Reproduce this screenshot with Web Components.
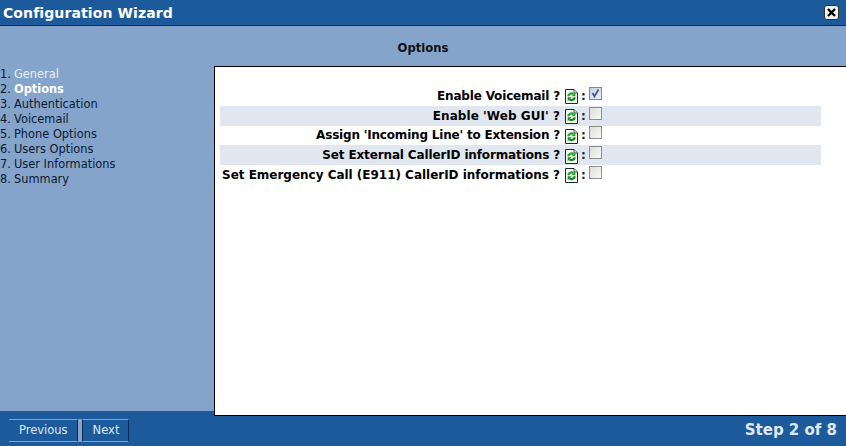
<!doctype html>
<html>
<head>
<meta charset="utf-8">
<style>
  html, body { margin: 0; height: 100%; }
  body { font: 11px "DejaVu Sans", Verdana, sans-serif; overflow: hidden; }
</style>
</head>
<body>
<wizard-window>
  <span slot="title">Configuration Wizard</span>
  <span slot="heading">Options</span>
  <wizard-steps slot="steps" current="2">
    <li>General</li><li>Options</li><li>Authentication</li><li>Voicemail</li>
    <li>Phone Options</li><li>Users Options</li><li>User Informations</li><li>Summary</li>
  </wizard-steps>
  <option-row checked style="--track:-.17px">Enable Voicemail ?</option-row>
  <option-row shaded style="--track:.06px">Enable 'Web GUI' ?</option-row>
  <option-row style="--track:-.19px">Assign 'Incoming Line' to Extension ?</option-row>
  <option-row shaded style="--track:-.14px">Set External CallerID informations ?</option-row>
  <option-row style="--track:-.02px">Set Emergency Call (E911) CallerID informations ?</option-row>
  <wiz-button slot="buttons">Previous</wiz-button>
  <wiz-button slot="buttons" class="next">Next</wiz-button>
  <span slot="status">Step 2 of 8</span>
</wizard-window>

<script>
class WizardWindow extends HTMLElement {
  constructor() {
    super()
    this.attachShadow({ mode: 'open' })
    this.shadowRoot.innerHTML = `
      <style>
        :host { display: flex; flex-direction: column; width: 846px; height: 446px; background: #84a4cc; overflow: hidden; }
        header { flex: none; height: 25px; border-bottom: 1px solid #0d2b4d; background: #1d5a9c; color: #fff;
          display: flex; align-items: center; justify-content: space-between; padding: 0 7px 0 3px; }
        header b { font-size: 14px; letter-spacing: .1px; }
        .close { width: 15px; height: 15px; box-sizing: border-box; border: 1px solid #333; border-radius: 3px; background: #f2f2f2;
          display: flex; margin-top: -1px; }
        .close svg { display: block; }
        h2 { flex: none; margin: 0; height: 40px; padding-top: 15px; box-sizing: border-box; text-align: center;
          font-size: 11.6px; line-height: 14px; color: #111; }
        .middle { flex: 1; min-height: 0; display: flex; position: relative; z-index: 1; margin-bottom: -5px; }
        aside { flex: none; width: 214px; padding-top: 1px; box-sizing: border-box; }
        main { flex: 1; background: #fff; border: 1px solid #000; border-right: 0; padding: 19px 25px 0 5px; }
        footer { flex: none; height: 35px; background: #1d5a9c; display: flex; align-items: center; justify-content: space-between;
          padding: 0 9px 0 9px; }
        .buttons { display: flex; padding-top: 3px; }
        .status { font-size: 15px; font-weight: bold; color: #dfe8f3; padding-top: 2px; }
      </style>
      <header><b><slot name="title"></slot></b>
        <span class="close"><svg width="13" height="13" viewBox="0 0 13 13"><path d="M3 3l7 7M10 3l-7 7" stroke="#000" stroke-width="2.4" fill="none"/></svg></span>
      </header>
      <h2><slot name="heading"></slot></h2>
      <div class="middle">
        <aside><slot name="steps"></slot></aside>
        <main><slot></slot></main>
      </div>
      <footer>
        <div class="buttons"><slot name="buttons"></slot></div>
        <div class="status"><slot name="status"></slot></div>
      </footer>`
  }
}

class WizardSteps extends HTMLElement {
  constructor() {
    super()
    this.attachShadow({ mode: 'open' })
    this.shadowRoot.innerHTML = `
      <style>
        :host { display: block; }
        ol { margin: 0; padding: 0; list-style: none; }
        li { height: 15px; line-height: 15px; font-size: 11.4px; color: #0a1a2e; white-space: nowrap; }
        li.done { color: #e8eef6; }
        li.now { color: #fff; font-weight: bold; }
        span { display: inline-block; width: 14px; color: #0a1a2e; font-weight: normal; }
      </style>
      <ol></ol>`
  }
  connectedCallback() {
    const current = Number(this.getAttribute('current'))
    const list = this.shadowRoot.querySelector('ol')
    ;[...this.querySelectorAll('li')].forEach((item, i) => {
      const li = document.createElement('li')
      if (i + 1 === current) li.className = 'now'
      else if (i + 1 < current) li.className = 'done'
      const num = document.createElement('span')
      num.textContent = `${i + 1}.`
      li.append(num, item.textContent)
      list.append(li)
    })
  }
}

class OptionRow extends HTMLElement {
  constructor() {
    super()
    this.attachShadow({ mode: 'open' })
    this.shadowRoot.innerHTML = `
      <style>
        :host { display: grid; grid-template-columns: 345px 13px 11px 16px; height: 19.75px; align-items: center; width: 601px; }
        :host([shaded]) { background: #e1e7f0; }
        .label { font-weight: bold; font-size: 12px; color: #000; text-align: right; padding-right: 5px; white-space: nowrap; box-sizing: border-box;
          letter-spacing: var(--track, 0); }
        svg { display: block; margin-top: 2px; }
        .colon { font-weight: bold; font-size: 12px; text-align: center; color: #222; }
        .box { width: 13px; height: 13px; box-sizing: border-box; margin-top: -5px; border: 1px solid #8e8e8e; background: linear-gradient(135deg, #dcdcd8, #fafaf8); }
        .box svg { margin: 0; }
        :host([checked]) .box { background: linear-gradient(135deg, #c6cfe4, #eef1f8); border-color: #7d86a3; }
      </style>
      <div class="label"><slot></slot></div>
      <svg width="13" height="15" viewBox="0 0 13 15">
        <path d="M.5.5h8.500l3.500 3.500v10.500H.5z" fill="#f6fbf4" stroke="#1a2a2a"/>
        <path d="M9 .5v3.500h3.500" fill="#cfe0cc" stroke="#1a2a2a" stroke-width=".7"/>
        <path d="M3.200 7.200a3.300 3.300 0 0 1 5.300-2" fill="none" stroke="#1fa32c" stroke-width="2.200"/>
        <path d="M10.400 3.400v3.900H6.600z" fill="#1fa32c"/>
        <path d="M9.800 8.300a3.300 3.300 0 0 1-5.300 2" fill="none" stroke="#178a24" stroke-width="2.200"/>
        <path d="M2.700 12.200V8.200h3.800z" fill="#178a24"/>
      </svg>
      <div class="colon">:</div>
      <div class="box"></div>`
    if (this.hasAttribute('checked')) {
      this.shadowRoot.querySelector('.box').innerHTML =
        '<svg width="11" height="11" viewBox="0 0 11 11"><path d="M2.500 5l2 3.500L8.500 1.500" fill="none" stroke="#4a5a94" stroke-width="1.800"/></svg>'
    }
  }
}

class WizButton extends HTMLElement {
  constructor() {
    super()
    this.attachShadow({ mode: 'open' })
    this.shadowRoot.innerHTML = `
      <style>
        :host { display: block; height: 23px; box-sizing: border-box; border-top: 1px solid #84a4cc; border-bottom: 1px solid #84a4cc;
          border-right: 1px solid #0a2a50; background: #1d5a9c; color: #dfe8f3; font-size: 11.5px; line-height: 21px; padding: 0 9px 0 10px; }
        :host(.next) { border-left: 1px solid #0a2a50; box-shadow: -4px 0 0 #84a4cc; margin-left: 4px; }
      </style>
      <slot></slot>`
  }
}

customElements.define('wizard-window', WizardWindow)
customElements.define('wizard-steps', WizardSteps)
customElements.define('option-row', OptionRow)
customElements.define('wiz-button', WizButton)
</script>
</body>
</html>
